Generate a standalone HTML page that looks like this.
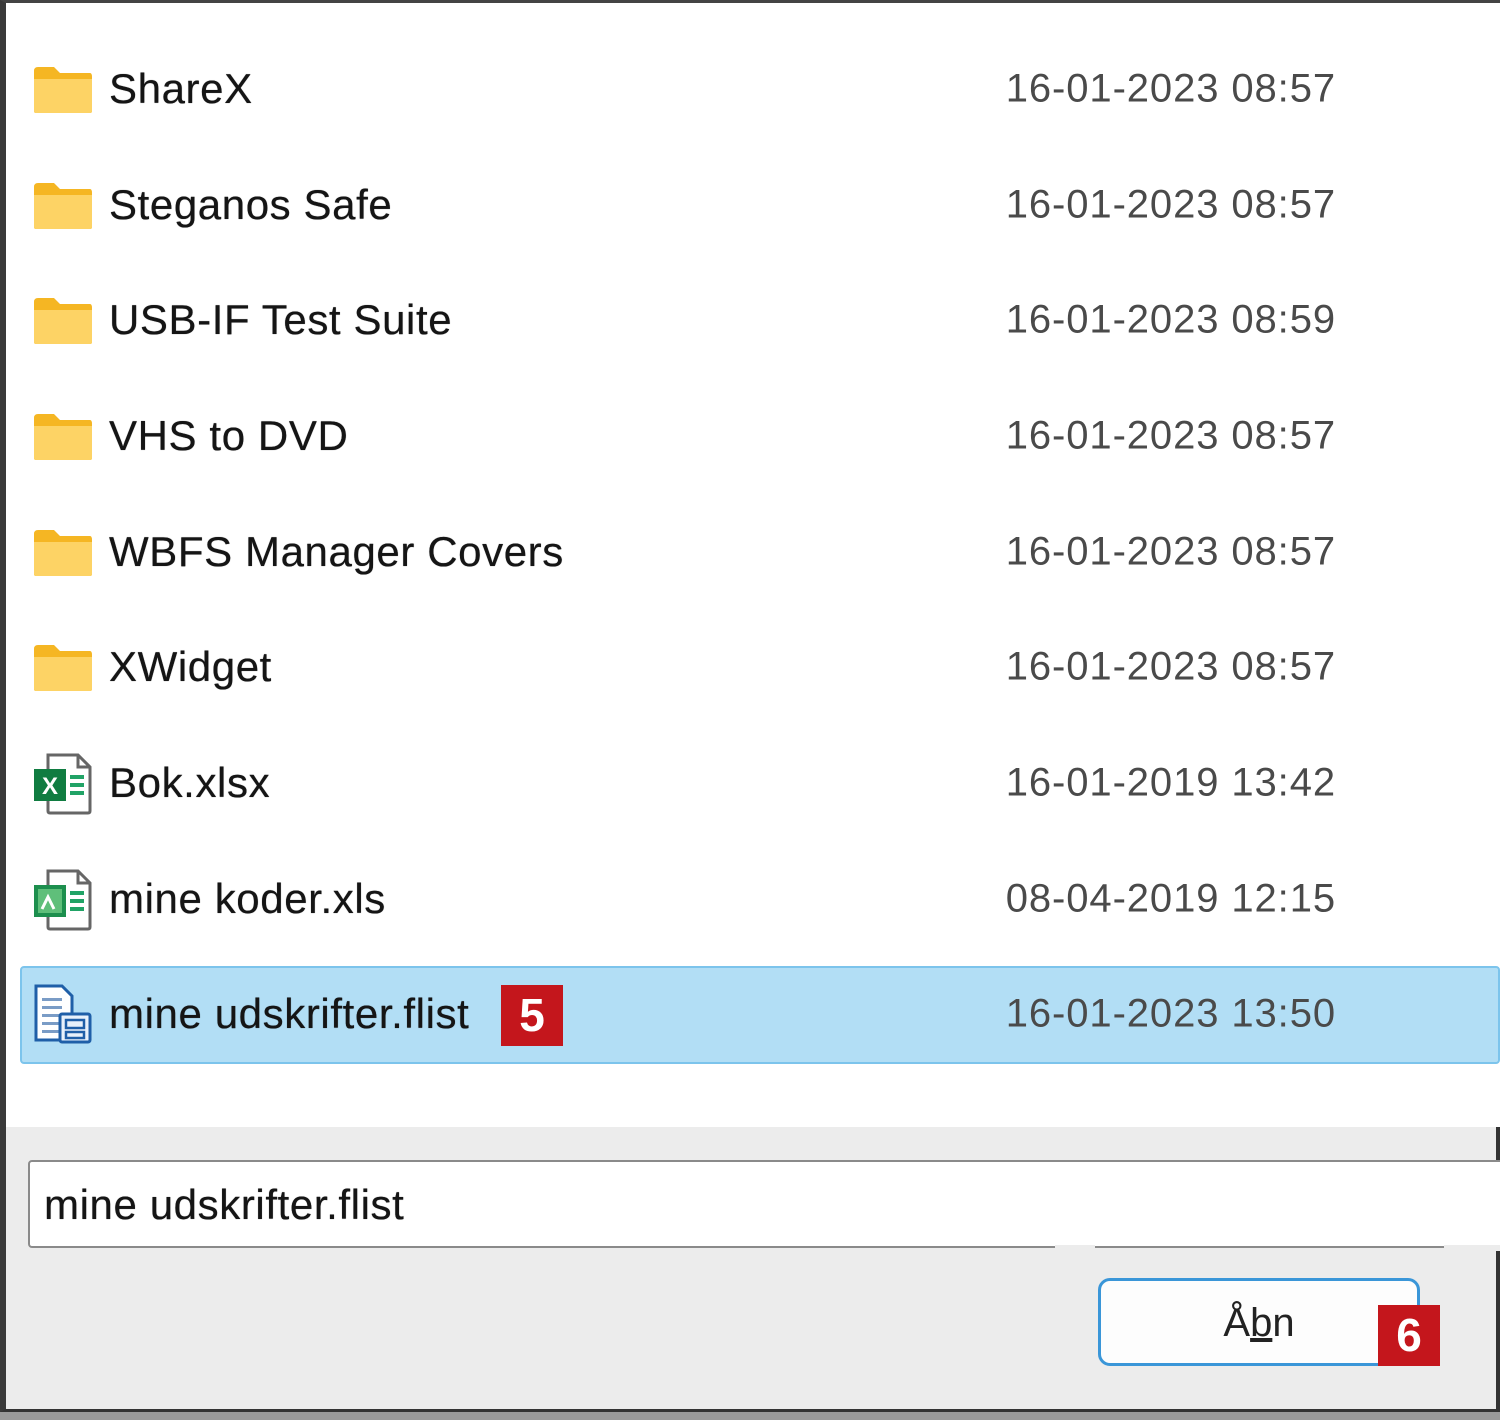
<!DOCTYPE html>
<html><head><meta charset="utf-8"><style>
*{margin:0;padding:0;box-sizing:border-box}
body{width:1500px;height:1420px;overflow:hidden;background:#9a9a9a;font-family:"Liberation Sans",sans-serif;position:relative}
.win{position:absolute;left:0;top:0;width:1500px;height:1412px;background:#fff;border-left:6px solid #3a3a3a;border-top:3px solid #444;border-bottom:3px solid #333}
.row{position:absolute;left:20px;width:1480px;height:98px}
.name{position:absolute;left:89px;font-size:42px;color:#151515;top:50%;transform:translateY(-52%);white-space:nowrap;letter-spacing:0.6px;text-shadow:0 0 0.6px #151515}
.date{position:absolute;right:164px;font-size:40px;color:#4a4a4a;top:50%;transform:translateY(-52%);white-space:nowrap;letter-spacing:0.9px}
.ic{position:absolute;left:12px;top:50%;transform:translateY(-50%)}
.sel{background:#b2def5;border:2px solid #7cc4ec;border-radius:4px}
.sel .name{left:87px}
.sel .ic{left:10px}
.foot{position:absolute;left:6px;top:1127px;width:1494px;height:282px;background:#ececec}
.inp{position:absolute;left:28px;top:1160px;width:1480px;height:88px;background:#fff;border:2px solid #8a8a8a;border-radius:4px;font-size:42px;color:#151515;padding:19px 0 0 14px;letter-spacing:0.6px;text-shadow:0 0 0.6px #151515}
.btn{position:absolute;left:1098px;top:1278px;width:322px;height:88px;background:#fdfdfd;border:3px solid #3a96d8;border-radius:12px;font-size:40px;color:#222;text-align:center;padding-top:20px}
.badge{position:absolute;background:#c4161c;color:#fff;font-weight:bold;font-size:46px;text-align:center;line-height:60px;width:62px;height:61px}
.rb{position:absolute;right:0;top:1127px;width:4px;height:285px;background:#333}
</style></head><body>
<div class="win"></div>
<div class="foot"></div>
<div class="rb"></div>

<div class="row" style="top:41px"><svg class="ic" width="62" height="50" viewBox="0 0 62 50"><path d="M2 6 Q2 2 6 2 H22 L28 8 H58 Q60 8 60 12 V46 Q60 48 58 48 H4 Q2 48 2 46Z" fill="#f5b623"/><path d="M2 14 H60 V46 Q60 48 58 48 H4 Q2 48 2 46Z" fill="#fdd365"/></svg><span class="name">ShareX</span><span class="date">16-01-2023 08:57</span></div>
<div class="row" style="top:157px"><svg class="ic" width="62" height="50" viewBox="0 0 62 50"><path d="M2 6 Q2 2 6 2 H22 L28 8 H58 Q60 8 60 12 V46 Q60 48 58 48 H4 Q2 48 2 46Z" fill="#f5b623"/><path d="M2 14 H60 V46 Q60 48 58 48 H4 Q2 48 2 46Z" fill="#fdd365"/></svg><span class="name">Steganos Safe</span><span class="date">16-01-2023 08:57</span></div>
<div class="row" style="top:272px"><svg class="ic" width="62" height="50" viewBox="0 0 62 50"><path d="M2 6 Q2 2 6 2 H22 L28 8 H58 Q60 8 60 12 V46 Q60 48 58 48 H4 Q2 48 2 46Z" fill="#f5b623"/><path d="M2 14 H60 V46 Q60 48 58 48 H4 Q2 48 2 46Z" fill="#fdd365"/></svg><span class="name">USB-IF Test Suite</span><span class="date">16-01-2023 08:59</span></div>
<div class="row" style="top:388px"><svg class="ic" width="62" height="50" viewBox="0 0 62 50"><path d="M2 6 Q2 2 6 2 H22 L28 8 H58 Q60 8 60 12 V46 Q60 48 58 48 H4 Q2 48 2 46Z" fill="#f5b623"/><path d="M2 14 H60 V46 Q60 48 58 48 H4 Q2 48 2 46Z" fill="#fdd365"/></svg><span class="name">VHS to DVD</span><span class="date">16-01-2023 08:57</span></div>
<div class="row" style="top:504px"><svg class="ic" width="62" height="50" viewBox="0 0 62 50"><path d="M2 6 Q2 2 6 2 H22 L28 8 H58 Q60 8 60 12 V46 Q60 48 58 48 H4 Q2 48 2 46Z" fill="#f5b623"/><path d="M2 14 H60 V46 Q60 48 58 48 H4 Q2 48 2 46Z" fill="#fdd365"/></svg><span class="name">WBFS Manager Covers</span><span class="date">16-01-2023 08:57</span></div>
<div class="row" style="top:619px"><svg class="ic" width="62" height="50" viewBox="0 0 62 50"><path d="M2 6 Q2 2 6 2 H22 L28 8 H58 Q60 8 60 12 V46 Q60 48 58 48 H4 Q2 48 2 46Z" fill="#f5b623"/><path d="M2 14 H60 V46 Q60 48 58 48 H4 Q2 48 2 46Z" fill="#fdd365"/></svg><span class="name">XWidget</span><span class="date">16-01-2023 08:57</span></div>
<div class="row" style="top:735px"><svg class="ic" width="62" height="62" viewBox="0 0 62 62"><path d="M16 2 H46 L58 14 V58 Q58 60 56 60 H18 Q16 60 16 58Z" fill="#fff" stroke="#666" stroke-width="3"/><path d="M46 2 V14 H58" fill="none" stroke="#666" stroke-width="3"/><rect x="38" y="22" width="14" height="4" fill="#21a366"/><rect x="38" y="30" width="14" height="4" fill="#21a366"/><rect x="38" y="38" width="14" height="4" fill="#21a366"/><rect x="2" y="16" width="32" height="32" fill="#107c41"/><text x="18" y="41" font-size="24" font-weight="bold" fill="#fff" text-anchor="middle" font-family="Liberation Sans">X</text></svg><span class="name">Bok.xlsx</span><span class="date">16-01-2019 13:42</span></div>
<div class="row" style="top:851px"><svg class="ic" width="62" height="62" viewBox="0 0 62 62"><path d="M16 2 H46 L58 14 V58 Q58 60 56 60 H18 Q16 60 16 58Z" fill="#fff" stroke="#666" stroke-width="3"/><path d="M46 2 V14 H58" fill="none" stroke="#666" stroke-width="3"/><rect x="38" y="22" width="14" height="4" fill="#21a366"/><rect x="38" y="30" width="14" height="4" fill="#21a366"/><rect x="38" y="38" width="14" height="4" fill="#21a366"/><rect x="2" y="16" width="32" height="32" fill="#1d8f4e"/><rect x="6" y="20" width="24" height="24" fill="#5fbf7a"/><path d="M10 40 L16 28 L22 40" stroke="#fff" stroke-width="3" fill="none"/></svg><span class="name">mine koder.xls</span><span class="date">08-04-2019 12:15</span></div>
<div class="row sel" style="top:966px"><svg class="ic" width="62" height="62" viewBox="0 0 62 62"><path d="M4 2 H30 L40 12 V56 H4Z" fill="#fff" stroke="#1f5fa8" stroke-width="3"/><rect x="10" y="14" width="20" height="3" fill="#7a9cc6"/><rect x="10" y="22" width="20" height="3" fill="#7a9cc6"/><rect x="10" y="30" width="20" height="3" fill="#7a9cc6"/><rect x="10" y="38" width="20" height="3" fill="#7a9cc6"/><rect x="10" y="46" width="20" height="3" fill="#7a9cc6"/><rect x="28" y="30" width="30" height="28" rx="2" fill="#e8f1fb" stroke="#1f5fa8" stroke-width="3"/><rect x="34" y="36" width="18" height="8" fill="none" stroke="#1f5fa8" stroke-width="2.5"/><rect x="34" y="48" width="18" height="6" fill="none" stroke="#1f5fa8" stroke-width="2.5"/></svg><span class="name">mine udskrifter.flist</span><span class="date" style="right:162px">16-01-2023 13:50</span></div>

<div class="badge" style="left:501px;top:985px">5</div>

<div class="inp">mine udskrifter.flist</div>
<div style="position:absolute;left:1055px;top:1245px;width:40px;height:6px;background:#ececec"></div>
<div style="position:absolute;left:1444px;top:1245px;width:56px;height:6px;background:#ececec"></div>
<div class="btn">Å<span style="text-decoration:underline">b</span>n</div>
<div class="badge" style="left:1378px;top:1305px">6</div>
</body></html>
